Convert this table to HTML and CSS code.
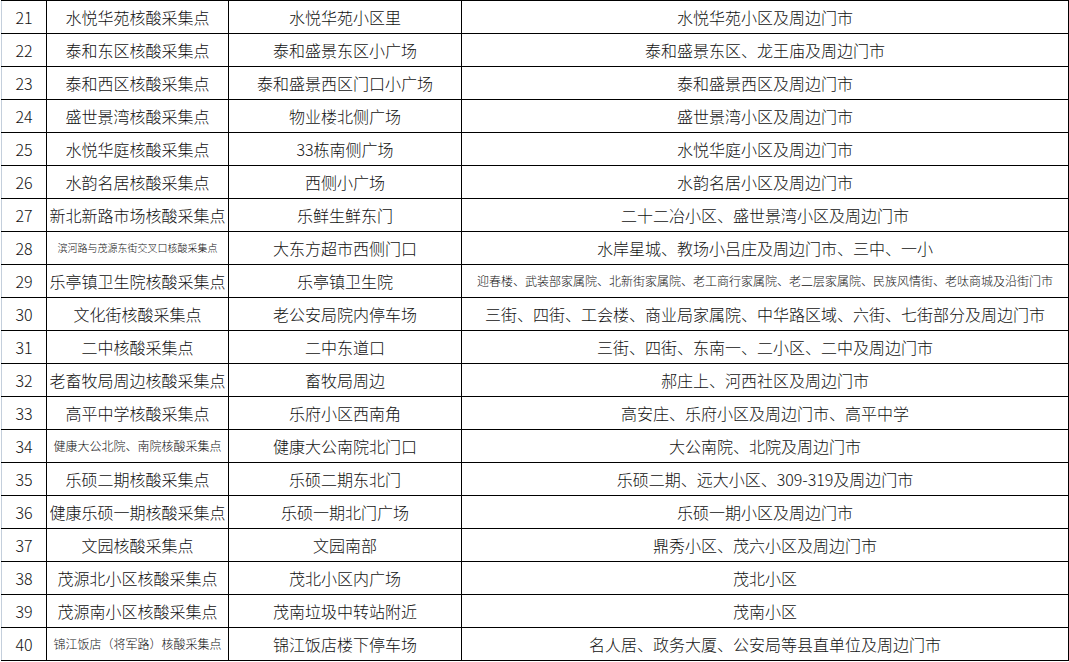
FILE: index.html
```html
<!DOCTYPE html>
<html lang="zh">
<head>
<meta charset="utf-8">
<link rel="stylesheet" href="styles.css">
</head>
<body>
<table class="sheet">
<colgroup><col class="c-no"><col class="c-name"><col class="c-loc"><col class="c-area"></colgroup>
<tbody>
<tr><td class="no">21</td><td>水悦华苑核酸采集点</td><td>水悦华苑小区里</td><td>水悦华苑小区及周边门市</td></tr>
<tr><td class="no">22</td><td>泰和东区核酸采集点</td><td>泰和盛景东区小广场</td><td>泰和盛景东区、龙王庙及周边门市</td></tr>
<tr><td class="no">23</td><td>泰和西区核酸采集点</td><td>泰和盛景西区门口小广场</td><td>泰和盛景西区及周边门市</td></tr>
<tr><td class="no">24</td><td>盛世景湾核酸采集点</td><td>物业楼北侧广场</td><td>盛世景湾小区及周边门市</td></tr>
<tr><td class="no">25</td><td>水悦华庭核酸采集点</td><td>33栋南侧广场</td><td>水悦华庭小区及周边门市</td></tr>
<tr><td class="no">26</td><td>水韵名居核酸采集点</td><td>西侧小广场</td><td>水韵名居小区及周边门市</td></tr>
<tr><td class="no">27</td><td>新北新路市场核酸采集点</td><td>乐鲜生鲜东门</td><td>二十二冶小区、盛世景湾小区及周边门市</td></tr>
<tr><td class="no">28</td><td class="xs">滨河路与茂源东街交叉口核酸采集点</td><td>大东方超市西侧门口</td><td>水岸星城、教场小吕庄及周边门市、三中、一小</td></tr>
<tr><td class="no">29</td><td>乐亭镇卫生院核酸采集点</td><td>乐亭镇卫生院</td><td class="sm">迎春楼、武装部家属院、北新街家属院、老工商行家属院、老二层家属院、民族风情街、老呔商城及沿街门市</td></tr>
<tr><td class="no">30</td><td>文化街核酸采集点</td><td>老公安局院内停车场</td><td>三街、四街、工会楼、商业局家属院、中华路区域、六街、七街部分及周边门市</td></tr>
<tr><td class="no">31</td><td>二中核酸采集点</td><td>二中东道口</td><td>三街、四街、东南一、二小区、二中及周边门市</td></tr>
<tr><td class="no">32</td><td>老畜牧局周边核酸采集点</td><td>畜牧局周边</td><td>郝庄上、河西社区及周边门市</td></tr>
<tr><td class="no">33</td><td>高平中学核酸采集点</td><td>乐府小区西南角</td><td>高安庄、乐府小区及周边门市、高平中学</td></tr>
<tr><td class="no">34</td><td class="sm">健康大公北院、南院核酸采集点</td><td>健康大公南院北门口</td><td>大公南院、北院及周边门市</td></tr>
<tr><td class="no">35</td><td>乐硕二期核酸采集点</td><td>乐硕二期东北门</td><td>乐硕二期、远大小区、309-319及周边门市</td></tr>
<tr><td class="no">36</td><td>健康乐硕一期核酸采集点</td><td>乐硕一期北门广场</td><td>乐硕一期小区及周边门市</td></tr>
<tr><td class="no">37</td><td>文园核酸采集点</td><td>文园南部</td><td>鼎秀小区、茂六小区及周边门市</td></tr>
<tr><td class="no">38</td><td>茂源北小区核酸采集点</td><td>茂北小区内广场</td><td>茂北小区</td></tr>
<tr><td class="no">39</td><td>茂源南小区核酸采集点</td><td>茂南垃圾中转站附近</td><td>茂南小区</td></tr>
<tr><td class="no">40</td><td class="sm">锦江饭店（将军路）核酸采集点</td><td>锦江饭店楼下停车场</td><td>名人居、政务大厦、公安局等县直单位及周边门市</td></tr>
</tbody>
</table>
</body>
</html>
```
FILE: styles.css
```css
html, body {
  margin: 0;
  padding: 0;
  background: #ffffff;
}
body {
  width: 1069px;
  height: 662px;
  overflow: hidden;
  font-family: "Noto Sans CJK SC", "Noto Sans", sans-serif;
  color: #111111;
}
.sheet {
  margin-left: 1px;
  border-collapse: collapse;
  table-layout: fixed;
  width: 1067px;
}
.c-no { width: 45px; }
.c-name { width: 182px; }
.c-loc { width: 233px; }
.c-area { width: 607px; }
.sheet td {
  height: 32px;
  padding: 0;
  border: 1px solid #000000;
  text-align: center;
  vertical-align: middle;
  white-space: nowrap;
  overflow: hidden;
  font-size: 16px;
  font-weight: 300;
  line-height: 32px;
}
.sheet td.no {
  border-left: 1px solid #c4cfdc;
}
.sheet td.sm { font-size: 12px; }
.sheet td.xs { font-size: 10px; }
```
